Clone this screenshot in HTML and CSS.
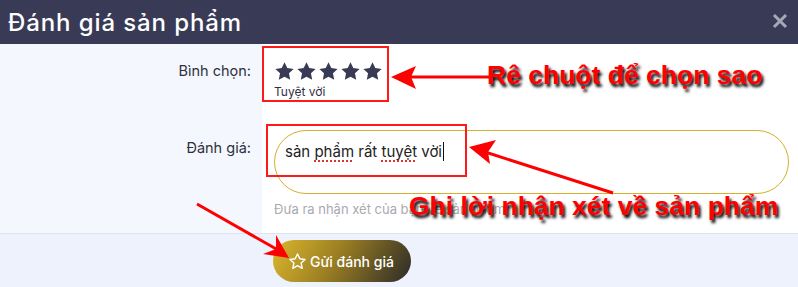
FILE: index.html
```html
<!DOCTYPE html>
<html lang="vi">
<head>
<meta charset="utf-8">
<link rel="stylesheet" href="styles.css">
</head>
<body>
<div class="modal">
  <div class="header">
    <h1 class="title">Đánh giá sản phẩm</h1>
    <svg class="close" viewBox="0 0 16 16" width="16" height="16"><path d="M2 2L14 14M14 2L2 14"/></svg>
  </div>
  <div class="body">
    <div class="label label-vote">Bình chọn:</div>
    <div class="field field-vote">
      <div class="stars">
        <svg viewBox="0 0 24 24" class="star"><path d="M12 1.5l3.2 6.6 7.2 1-5.3 5 1.4 7.2L12 17.9l-6.5 3.4 1.4-7.2-5.3-5 7.2-1z"/></svg>
        <svg viewBox="0 0 24 24" class="star"><path d="M12 1.5l3.2 6.6 7.2 1-5.3 5 1.4 7.2L12 17.9l-6.5 3.4 1.4-7.2-5.3-5 7.2-1z"/></svg>
        <svg viewBox="0 0 24 24" class="star"><path d="M12 1.5l3.2 6.6 7.2 1-5.3 5 1.4 7.2L12 17.9l-6.5 3.4 1.4-7.2-5.3-5 7.2-1z"/></svg>
        <svg viewBox="0 0 24 24" class="star"><path d="M12 1.5l3.2 6.6 7.2 1-5.3 5 1.4 7.2L12 17.9l-6.5 3.4 1.4-7.2-5.3-5 7.2-1z"/></svg>
        <svg viewBox="0 0 24 24" class="star"><path d="M12 1.5l3.2 6.6 7.2 1-5.3 5 1.4 7.2L12 17.9l-6.5 3.4 1.4-7.2-5.3-5 7.2-1z"/></svg>
      </div>
      <div class="rating-text">Tuyệt vời</div>
    </div>
    <div class="label label-review">Đánh giá:</div>
    <div class="field field-review">
      <div class="textarea">sản <span class="spell">phẩm</span> rất <span class="spell">tuyệt</span> vời<span class="caret"></span></div>
      <div class="hint">Đưa ra nhận xét của bạn về sản phẩm</div>
    </div>
  </div>
  <div class="footer">
    <button class="submit">
      <svg viewBox="0 0 24 24" class="btn-star"><path d="M12 2.5l2.9 6.1 6.6.8-4.9 4.6 1.3 6.6L12 17.3l-5.9 3.3 1.3-6.6-4.9-4.6 6.6-.8z"/></svg>
      <span>Gửi đánh giá</span>
    </button>
  </div>

  <div class="mark mark-stars"></div>
  <div class="mark mark-review"></div>
  <div class="note note-1">Rê chuột để chọn sao</div>
  <div class="note note-2">Ghi lời nhận xét về sản phẩm</div>
  <svg class="arrows" viewBox="0 0 798 287" width="798" height="287">
    <g fill="#ff0000" stroke="#ff0000">
      <line x1="490" y1="77" x2="402" y2="77" stroke-width="3"/>
      <polygon points="391,77 416,66 411,77 416,89" stroke="none"/>
      <line x1="613" y1="193" x2="482" y2="151" stroke-width="3"/>
      <polygon points="469,147 496,140 488,152 490,164" stroke="none"/>
      <line x1="197" y1="204" x2="278" y2="250" stroke-width="3"/>
      <polygon points="289,258 263,254 276,249 276,235" stroke="none"/>
    </g>
  </svg>
</div>
</body>
</html>
```
FILE: styles.css
```css
* { box-sizing: border-box; }
html, body { margin: 0; padding: 0; }
body {
  width: 798px;
  height: 287px;
  overflow: hidden;
  background: #fff;
  font-family: "Inter", "Open Sans", sans-serif;
}
.modal {
  position: relative;
  width: 798px;
  height: 287px;
  display: flex;
  flex-direction: column;
}
.header {
  height: 44px;
  background: #393b56;
  display: flex;
  align-items: center;
  justify-content: space-between;
  padding: 0 10px 0 8px;
}
.title {
  margin: 0;
  color: #fff;
  font-size: 24px;
  font-weight: 500;
  letter-spacing: 0.9px;
}
.close {
  fill: none;
  stroke: #a6a8b8;
  stroke-width: 3;
  margin-top: -2px;
}
.body {
  display: grid;
  grid-template-columns: 262px 1fr;
  grid-template-rows: 68px 121px;
}
.label {
  background: #f4f7fe;
  text-align: right;
  padding-right: 11px;
  font-size: 14.5px;
  color: #2f3040;
  line-height: 20px;
}
.label-vote { padding-top: 17px; }
.label-review { padding-top: 26px; }
.field { background: #fff; padding-left: 12px; }
.field-vote { padding-top: 17px; }
.stars { display: flex; gap: 1px; height: 21px; }
.star { width: 21px; height: 21px; fill: #393b56; }
.rating-text {
  font-size: 12px;
  color: #2f3040;
  margin-top: 2px;
  line-height: 15px;
}
.field-review { padding-top: 18px; padding-right: 9px; }
.textarea {
  height: 64px;
  border: 1px solid #d9ad2d;
  border-radius: 32px;
  padding: 11px 10px;
  font-size: 15px;
  color: #222;
  line-height: 20px;
}
.spell {
  text-decoration: underline dotted #e03030;
  text-decoration-thickness: 2px;
  text-underline-offset: 3px;
}
.caret {
  display: inline-block;
  width: 1px;
  height: 19px;
  background: #111;
  vertical-align: -4px;
  margin-left: 1px;
}
.hint {
  margin-top: 7px;
  font-size: 13px;
  color: #a9a9b0;
  line-height: 16px;
}
.footer {
  flex: 1;
  background: #edf2fc;
  border-top: 1px solid #dfe3ea;
  padding: 6px 0 0 273px;
}
.submit {
  width: 138px;
  height: 42px;
  border: none;
  border-radius: 21px;
  background: linear-gradient(120deg, #dbb72c 0%, #9a7e23 45%, #2c2a28 100%);
  color: #fff;
  font-family: "Inter", "Open Sans", sans-serif;
  font-size: 14px;
  font-weight: 500;
  display: flex;
  align-items: center;
  gap: 3px;
  padding: 0 0 0 15px;
}
.btn-star {
  width: 19px;
  height: 19px;
  fill: none;
  stroke: #fff;
  stroke-width: 1.8;
  stroke-linejoin: round;
}
.mark {
  position: absolute;
  border: 2px solid #ff1a1a;
}
.mark-stars { left: 262px; top: 46px; width: 127px; height: 56px; }
.mark-review { left: 266px; top: 124px; width: 201px; height: 53px; }
.note {
  position: absolute;
  color: #ff0000;
  font-family: "Liberation Sans", Arial, sans-serif;
  font-weight: 700;
  font-size: 26.5px;
  text-shadow: 2px 3px 3px #000;
  white-space: nowrap;
}
.note-1 { left: 487px; top: 60px; }
.note-2 { left: 409px; top: 191px; }
.arrows {
  position: absolute;
  left: 0;
  top: 0;
  pointer-events: none;
}
```
